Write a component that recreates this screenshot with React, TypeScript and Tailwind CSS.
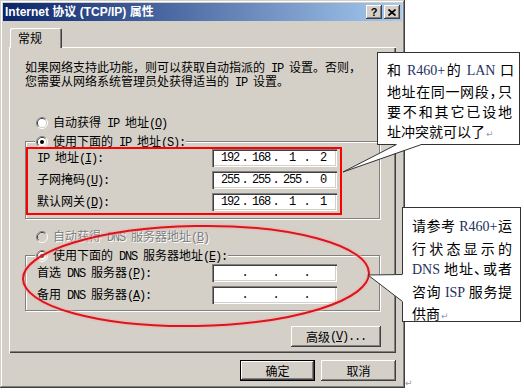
import React from "react";

const CJK = "font-['Noto_Sans_CJK_SC',sans-serif]";

function T({ s }: { s: string }) {
  const parts = s.split(/([\x20-\x7e]+)/).filter(Boolean);
  return (
    <>
      {parts.map((p, i) => {
        if (/^[\x20-\x7e]+$/.test(p)) {
          const segs = p.split(/(&.)/).filter(Boolean);
          return (
            <span key={i} className="font-['Liberation_Mono',monospace] tracking-[-1.2px]">
              {segs.map((g, j) =>
                g.length === 2 && g[0] === "&" ? (
                  <span key={j} className="underline underline-offset-[1px]">
                    {g[1]}
                  </span>
                ) : (
                  <React.Fragment key={j}>{g}</React.Fragment>
                )
              )}
            </span>
          );
        }
        return <span key={i}>{p}</span>;
      })}
    </>
  );
}

function Radio({ checked, disabled }: { checked?: boolean; disabled?: boolean }) {
  return (
    <svg width="12" height="12" viewBox="0 0 12 12" className="shrink-0">
      <path d="M2.11 9.89 A5.5 5.5 0 0 1 9.89 2.11" fill="none" stroke="#808080" strokeWidth="1" />
      <path d="M9.89 2.11 A5.5 5.5 0 0 1 2.11 9.89" fill="none" stroke="#ffffff" strokeWidth="1" />
      <path d="M2.82 9.18 A4.5 4.5 0 0 1 9.18 2.82" fill="none" stroke="#404040" strokeWidth="1" />
      <path d="M9.18 2.82 A4.5 4.5 0 0 1 2.82 9.18" fill="none" stroke="#d4d0c8" strokeWidth="1" />
      <circle cx="6" cy="6" r="4" fill={disabled ? "#d4d0c8" : "#ffffff"} />
      {checked && <circle cx="6" cy="6" r="2" fill={disabled ? "#808080" : "#000000"} />}
    </svg>
  );
}

function RadioRow({
  label,
  checked,
  disabled,
  className = "",
}: {
  label: string;
  checked?: boolean;
  disabled?: boolean;
  className?: string;
}) {
  return (
    <div className={`flex items-center h-[12px] gap-[5px] ${className}`}>
      <Radio checked={checked} disabled={disabled} />
      <span
        className={`text-[12px] leading-[12px] whitespace-nowrap ${
          disabled ? "text-[#808080] [text-shadow:1px_1px_0_#ffffff]" : "text-black"
        }`}
      >
        <T s={label} />
      </span>
    </div>
  );
}

function IPField({ v }: { v?: string[] }) {
  return (
    <div className="flex items-center h-[18px] w-[125px] pl-[2px] bg-white shadow-[inset_1px_1px_#808080,inset_2px_2px_#404040,inset_-1px_-1px_#ffffff,inset_-2px_-2px_#d4d0c8] text-[12px] leading-[12px] text-black font-['Liberation_Mono',monospace]">
      {[0, 1, 2, 3].map((i) => (
        <React.Fragment key={i}>
          <span className="w-[31px] shrink-0 text-center tracking-[-1.2px] pl-[1px]">{v ? v[i] : ""}</span>
          {i < 3 && <span className="w-0 shrink-0 flex justify-center">.</span>}
        </React.Fragment>
      ))}
    </div>
  );
}

function Btn({ label, w, def }: { label: string; w: string; def?: boolean }) {
  return (
    <div
      className={`flex items-center justify-center h-[21px] ${w} bg-[#d4d0c8] text-[12px] leading-[12px] text-black whitespace-nowrap ${
        def
          ? "border border-black shadow-[inset_-1px_-1px_#404040,inset_1px_1px_#ffffff,inset_-2px_-2px_#808080,inset_2px_2px_#d4d0c8]"
          : "shadow-[inset_-1px_-1px_#404040,inset_1px_1px_#ffffff,inset_-2px_-2px_#808080,inset_2px_2px_#d4d0c8]"
      }`}
    >
      <T s={label} />
    </div>
  );
}

function TitleBtn({ children }: { children: React.ReactNode }) {
  return (
    <div className="flex items-center justify-center w-[16px] h-[14px] bg-[#d4d0c8] shadow-[inset_-1px_-1px_#404040,inset_1px_1px_#ffffff,inset_-2px_-2px_#808080,inset_2px_2px_#d4d0c8]">
      {children}
    </div>
  );
}

function Row({ label, v, pl, cols }: { label: string; v?: string[]; pl: string; cols: string }) {
  return (
    <div className={`grid ${cols} items-center h-[18px]`}>
      <span className={`${pl} text-[12px] leading-[12px] whitespace-nowrap text-black`}>
        <T s={label} />
      </span>
      <IPField v={v} />
    </div>
  );
}

const L = ({ c }: { c: string }) => (
  <span className="font-['Liberation_Serif',serif] text-[#24305e]">{c}</span>
);
const Ret = () => (
  <span className="font-['DejaVu_Sans',sans-serif] text-[9px] text-[#9a9aae] ml-[1px]">↵</span>
);
const P = ({ c }: { c: string }) => <span className="tracking-[-6px]">{c}</span>;

export default function App() {
  return (
    <div className={`relative w-[524px] h-[392px] overflow-hidden bg-white ${CJK}`}>
      {/* Dialog */}
      <div className="flex flex-col w-[405px] h-[388px] bg-[#d4d0c8] p-[3px] shadow-[inset_-1px_-1px_#404040,inset_1px_1px_#d4d0c8,inset_-2px_-2px_#808080,inset_2px_2px_#ffffff]">
        {/* Title bar */}
        <div className="flex items-center h-[18px] px-[2px] bg-[linear-gradient(to_right,#0a246a,#a6caf0)]">
          <span className="text-white font-bold text-[12px] leading-[12px] whitespace-nowrap font-['Liberation_Sans','Noto_Sans_CJK_SC',sans-serif]">
            Internet 协议 (TCP/IP) 属性
          </span>
          <div className="ml-auto flex gap-[2px]">
            <TitleBtn>
              <span className="font-['Liberation_Sans',sans-serif] font-bold text-[11px] leading-[11px] text-black">?</span>
            </TitleBtn>
            <TitleBtn>
              <svg width="8" height="7" viewBox="0 0 8 7">
                <path d="M0.5 0.5L7.5 6.5M7.5 0.5L0.5 6.5" stroke="#000" strokeWidth="1.7" />
              </svg>
            </TitleBtn>
          </div>
        </div>

        {/* Body */}
        <div className="flex flex-col pl-[6px] pr-[6px] pt-[7px]">
          {/* Tabs */}
          <div className="flex">
            <div className="relative z-10 ml-[1px] -mb-[1px] w-[52px] h-[20px] flex items-center pl-[8px] bg-[#d4d0c8] rounded-t-[2px] shadow-[inset_1px_1px_#ffffff,inset_-1px_0_#404040,inset_-2px_0_#808080] text-[12px] leading-[12px] text-black">
              常规
            </div>
          </div>

          {/* Panel */}
          <div className="flex flex-col h-[306px] pl-[16px] pr-[15px] pt-[14px] shadow-[inset_1px_1px_#ffffff,inset_-1px_-1px_#404040,inset_-2px_-2px_#808080]">
            <p className="text-[12px] leading-[12px] whitespace-nowrap text-black">
              <T s="如果网络支持此功能，则可以获取自动指派的 IP 设置。否则，" />
              <br />
              <T s="您需要从网络系统管理员处获得适当的 IP 设置。" />
            </p>

            <RadioRow className="mt-[28px] ml-[11px]" label="自动获得 IP 地址(&O)" />

            {/* Group box 1 */}
            <div className="flex flex-col w-[355px] mt-[12px] pb-[3px] border border-[#808080] shadow-[inset_1px_1px_0_#ffffff,1px_1px_0_#ffffff]">
              <div className="self-start -mt-[6px] ml-[9px] px-[1px] bg-[#d4d0c8]">
                <RadioRow checked label="使用下面的 IP 地址(&S):" />
              </div>
              <div className="-mt-[1px] w-[316px] h-[68px] border-2 border-[#ff0000] flex flex-col gap-[4px]">
                <Row cols="grid-cols-[184px_125px]" pl="pl-[9px]" label="IP 地址(&I):" v={["192", "168", "1", "2"]} />
                <Row cols="grid-cols-[184px_125px]" pl="pl-[9px]" label="子网掩码(&U):" v={["255", "255", "255", "0"]} />
                <Row cols="grid-cols-[184px_125px]" pl="pl-[9px]" label="默认网关(&D):" v={["192", "168", "1", "1"]} />
              </div>
            </div>

            <RadioRow className="mt-[12px] ml-[11px]" disabled label="自动获得 DNS 服务器地址(&B)" />

            {/* Group box 2 */}
            <div className="flex flex-col w-[355px] mt-[12px] pb-[6px] border border-[#808080] shadow-[inset_1px_1px_0_#ffffff,1px_1px_0_#ffffff]">
              <div className="self-start -mt-[6px] ml-[9px] px-[1px] bg-[#d4d0c8]">
                <RadioRow checked label="使用下面的 DNS 服务器地址(&E):" />
              </div>
              <div className="mt-[2px] flex flex-col gap-[4px]">
                <Row cols="grid-cols-[186px_125px]" pl="pl-[11px]" label="首选 DNS 服务器(&P):" />
                <Row cols="grid-cols-[186px_125px]" pl="pl-[11px]" label="备用 DNS 服务器(&A):" />
              </div>
            </div>

            <div className="self-end mt-[15px]">
              <Btn w="w-[90px]" label="高级(&V)..." />
            </div>
          </div>

          {/* Bottom buttons */}
          <div className="flex justify-end gap-[6px] mt-[7px]">
            <Btn w="w-[75px]" def label="确定" />
            <Btn w="w-[75px]" label="取消" />
          </div>
        </div>
      </div>

      {/* paragraph mark below dialog */}
      <span className="absolute left-[405px] top-[379px] font-['DejaVu_Sans',sans-serif] text-[9px] leading-[9px] text-[#9a9aae]">↵</span>

      {/* Callout 1 */}
      <div className="absolute left-[377px] top-[52px] w-[143px] h-[93px] bg-white border border-[#333333] pl-[9px] pr-[5px] pt-[6px] text-[14px] leading-[20px] text-black">
        <div className="text-justify [text-align-last:justify]">
          和 <L c="R460+" />的 <L c="LAN" /> 口
        </div>
        <div className="text-justify [text-align-last:justify] pr-[2px]">
          地址在同一网段<P c="，" />只
        </div>
        <div className="text-justify [text-align-last:justify] pr-[2px]">要不和其它已设地</div>
        <div>
          址冲突就可以了
          <Ret />
        </div>
      </div>

      {/* Callout 2 */}
      <div className="absolute left-[402px] top-[207px] w-[119px] h-[115px] bg-white border border-[#333333] pl-[9px] pr-[7px] pt-[7px] text-[14px] leading-[20.5px] text-black">
        <div className="text-justify [text-align-last:justify] pr-[1px]">
          请参考 <L c="R460+" />运
        </div>
        <div className="text-justify [text-align-last:justify] pr-[1px]">行状态显示的</div>
        <div className="text-justify [text-align-last:justify] pr-[1px]">
          <L c="DNS" /> 地址<P c="、" />或者
        </div>
        <div className="text-justify [text-align-last:justify] pr-[1px]">
          咨询 <L c="ISP" /> 服务提
        </div>
        <div>
          供商
          <Ret />
        </div>
      </div>

      {/* Overlay drawing: ellipse and callout pointers */}
      <svg className="absolute left-0 top-0 pointer-events-none" width="524" height="392" viewBox="0 0 524 392">
        <ellipse cx="196" cy="276" rx="173" ry="50" transform="rotate(-1 196 276)" fill="none" stroke="#f2b0b0" strokeWidth="5" opacity="0.5" />
        <ellipse cx="196" cy="276" rx="173" ry="50" transform="rotate(-1 196 276)" fill="none" stroke="#d8161b" strokeWidth="2" />

        <rect x="397" y="143.5" width="24" height="2" fill="#ffffff" />
        <polygon points="397,144 421,144 343,172" fill="#ffffff" />
        <polyline points="396.5,144.5 343,172 421.5,144.5" fill="none" stroke="#333333" strokeWidth="1" />

        <rect x="401.5" y="274.5" width="2" height="27" fill="#ffffff" />
        <polygon points="403,274 403,302 368,275" fill="#ffffff" />
        <polyline points="402.5,274.5 368,275 402.5,301.5" fill="none" stroke="#333333" strokeWidth="1" />
      </svg>
    </div>
  );
}
